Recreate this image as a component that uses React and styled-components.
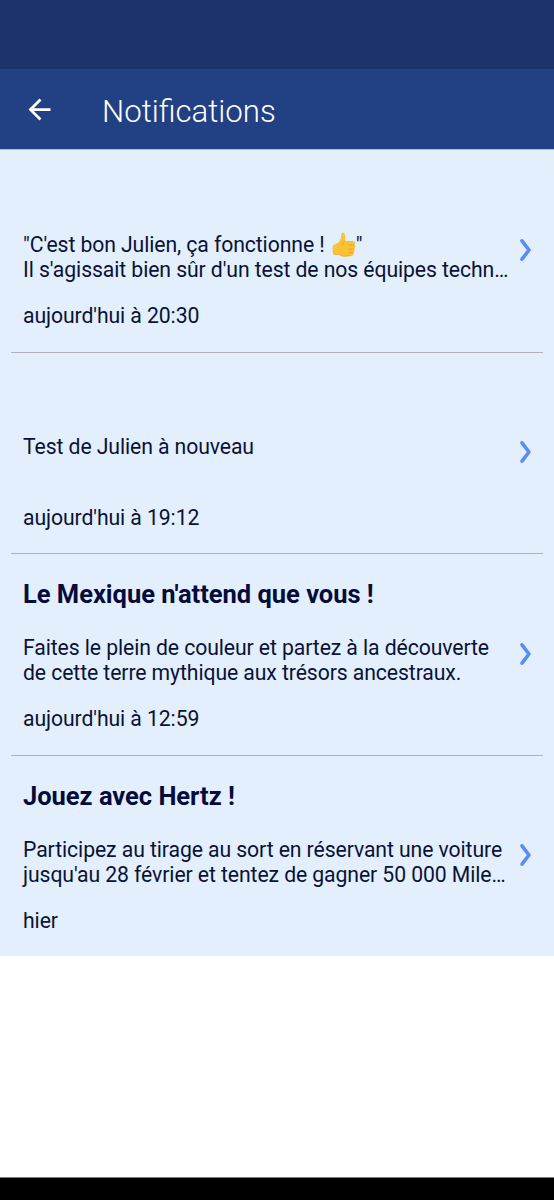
import React from "react";
import styled, { createGlobalStyle } from "styled-components";

const GlobalStyle = createGlobalStyle`
  * { box-sizing: border-box; }
  body {
    margin: 0;
    background: #fff;
    font-family: Roboto, sans-serif;
    -webkit-font-smoothing: antialiased;
  }
`;

const Screen = styled.div`
  display: flex;
  flex-direction: column;
  height: 1200px;
  overflow: hidden;
`;

const StatusBar = styled.div`
  flex: none;
  height: 69px;
  background: #1c3469;
`;

const AppBar = styled.header`
  flex: none;
  display: flex;
  align-items: center;
  height: 80px;
  padding: 5px 24px 0 23px;
  background: #214184;
  color: #fff;
`;

const BackButton = styled.button`
  display: flex;
  padding: 0;
  margin: -5px 46px 0 0;
  border: 0;
  background: none;
  color: inherit;
`;

const ScreenTitle = styled.h1`
  margin: 0;
  font-size: 31.2px;
  font-weight: 300;
  line-height: 40px;
  white-space: nowrap;
`;

const List = styled.ul`
  flex: none;
  margin: 0;
  padding: 1px 11px 0;
  list-style: none;
  background: #e3effc;
  border-top: 1px solid #b4becf;
`;

const Item = styled.li`
  display: flex;
  height: 201.7px;
  padding: 0 11px 0 12px;
  border-bottom: 1px solid #adb3b8;
  &:last-child {
    height: 200px;
    border-bottom: 0;
  }
`;

const Content = styled.div`
  flex: 1;
  min-width: 0;
  color: #0a1238;
`;

const Subject = styled.h2`
  height: 30px;
  margin: 25px 0 25px;
  font-size: 25.5px;
  font-weight: 700;
  line-height: 30px;
  letter-spacing: -0.02px;
  color: #050b3a;
  white-space: nowrap;
`;

const Message = styled.div`
  height: 50px;
  padding-top: 2px;
`;

const Line = styled.p`
  height: 24.5px;
  margin: 0;
  font-size: 21.2px;
  line-height: 24.5px;
  letter-spacing: -0.09px;
  white-space: nowrap;
`;

const Time = styled.time`
  display: block;
  margin-top: 22px;
  font-size: 21.2px;
  line-height: 26px;
  letter-spacing: -0.09px;
`;

const Emoji = styled.svg`
  width: 24px;
  height: 25px;
  margin: -4px 0 -5px 2px;
  vertical-align: baseline;
`;

const Chevron = styled.svg`
  flex: none;
  width: 14px;
  height: 26px;
  margin: 86.3px -1px 0 1px;
`;

const ThumbsUp = () => (
  <Emoji viewBox="0 0 25 25" preserveAspectRatio="none" role="img" aria-label="thumbs up">
    <path
      d="M1.2 13.2 6.4 10.8C7.9 9.3 9 7.7 9.3 5.8l.4-3.7C10 .6 11.7.2 12.8 1.5c1.3 1.6 1.3 4.3.5 7.6l8.3-.2c1.7 0 2.5 1 2.2 2.4-.1.8-.4 1.2-.9 1.5 1 .6 1.4 1.5 1.1 2.5-.2.8-.6 1.2-1.2 1.5.7.6.9 1.3.7 2.2-.2.8-.7 1.3-1.4 1.5.4.6.5 1.1.3 1.8-.3 1.2-1.3 1.6-2.6 1.7l-7.3.4c-2.2 0-3.7-.8-5.3-1.9l-5.7-.1C.4 19.7.2 16 1.2 13.2Z"
      fill="#fbc233"
    />
    <path
      d="M22.9 12.8c-1.8.5-4.2.5-5.7.2M22.8 16.8c-1.7.5-3.9.5-5.5.2M22.1 20.5c-1.6.4-3.3.4-4.6.1M13.4 9.1c-.4 1.2-1.3 2-2.5 2.2"
      fill="none"
      stroke="#e79f2c"
      strokeWidth="1"
      strokeLinecap="round"
    />
    <path d="M1.6 21.9c2.2.5 4.1.3 5.9.5 1.6 1.1 3.1 1.8 5.1 1.7l7-.4" fill="none" stroke="#eda92c" strokeWidth=".9" />
  </Emoji>
);

const notifications = [
  {
    lines: [
      <>"C'est bon Julien, ça fonctionne ! <ThumbsUp />"</>,
      "Il s'agissait bien sûr d'un test de nos équipes techn…",
    ],
    time: "aujourd'hui à 20:30",
  },
  { lines: ["Test de Julien à nouveau"], time: "aujourd'hui à 19:12" },
  {
    subject: "Le Mexique n'attend que vous !",
    lines: [
      "Faites le plein de couleur et partez à la découverte",
      "de cette terre mythique aux trésors ancestraux.",
    ],
    time: "aujourd'hui à 12:59",
  },
  {
    subject: "Jouez avec Hertz !",
    lines: [
      "Participez au tirage au sort en réservant une voiture",
      "jusqu'au 28 février et tentez de gagner 50 000 Mile…",
    ],
    time: "hier",
  },
];

const Navigation = styled.div`
  flex: none;
  height: 23px;
  margin-top: auto;
  background: #000;
  border-top: 1px solid #777;
`;

export default function App() {
  return (
    <>
      <GlobalStyle />
      <Screen>
        <StatusBar />
        <AppBar>
          <BackButton aria-label="Retour">
            <svg width="33" height="33" viewBox="0 0 24 24" fill="currentColor">
              <path d="M20 11H7.83l5.59-5.59L12 4l-8 8 8 8 1.41-1.41L7.83 13H20v-2z" />
            </svg>
          </BackButton>
          <ScreenTitle>Notifications</ScreenTitle>
        </AppBar>
        <List>
          {notifications.map((n) => (
            <Item key={n.time}>
              <Content>
                <Subject>{n.subject}</Subject>
                <Message>
                  {n.lines.map((line, i) => (
                    <Line key={i}>{line}</Line>
                  ))}
                </Message>
                <Time>{n.time}</Time>
              </Content>
              <Chevron viewBox="0 0 14 26">
                <path
                  d="M3 3.8 10 13 3 22.2"
                  fill="none"
                  stroke="#5b8def"
                  strokeWidth="3.6"
                  strokeLinecap="round"
                  strokeLinejoin="round"
                />
              </Chevron>
            </Item>
          ))}
        </List>
        <Navigation />
      </Screen>
    </>
  );
}
